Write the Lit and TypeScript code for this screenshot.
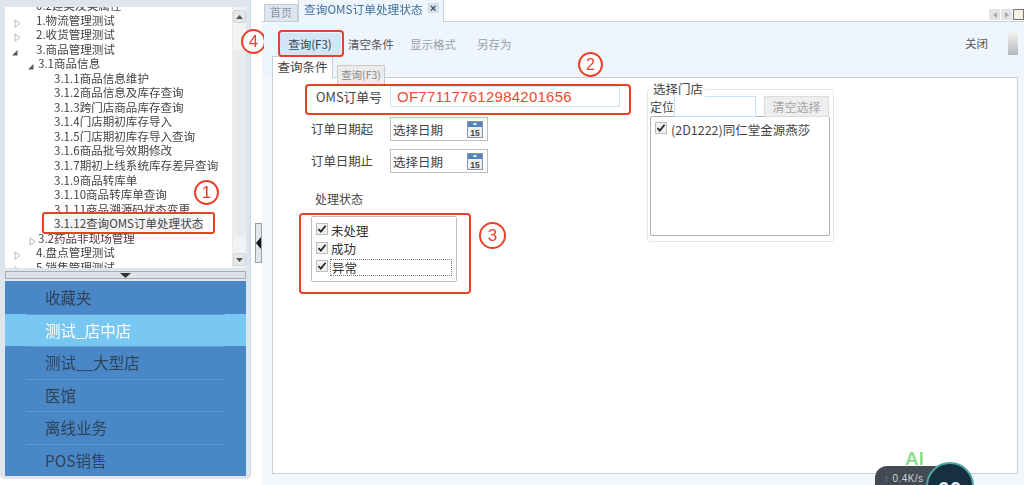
import { LitElement, html, css, svg } from "lit";
import { customElement } from "lit/decorators.js";

const closedTri = svg`<svg class="tri" width="7" height="9" viewBox="0 0 7 9"><path d="M1 .8 6 4.5 1 8.2Z" fill="#fff" stroke="#b4b8bc"/></svg>`;
const openTri = svg`<svg class="tri" width="7" height="9" viewBox="0 0 7 9"><path d="M6.5 2V7.5H1Z" fill="#555"/></svg>`;
const check = svg`<svg class="chk" width="12" height="12" viewBox="0 0 12 12"><rect x=".5" y=".5" width="11" height="11" fill="#f1f1f1" stroke="#bdbdbd"/><path d="M2.4 6 4.8 8.6 9.6 2.8" fill="none" stroke="#222" stroke-width="1.7"/></svg>`;
const cal = svg`<svg class="cal" width="16" height="17" viewBox="0 0 16 17"><rect x=".5" y=".5" width="15" height="16" fill="#eef1f4" stroke="#8c959d"/><rect x="1" y="1" width="14" height="5" fill="#4f86bd"/><rect x="6.5" y="2" width="3" height="2" fill="#e8f0f8"/><text x="8" y="14.5" text-anchor="middle" font-size="8.5" font-weight="700" font-family="Liberation Sans" fill="#3c4650">15</text></svg>`;

const tree: [string, number, string][] = [
  ["0.2建类及类属性", 31, ""],
  ["1.物流管理测试", 31, "c"],
  ["2.收货管理测试", 31, "c"],
  ["3.商品管理测试", 31, "o"],
  ["3.1商品信息", 33, "o2"],
  ["3.1.1商品信息维护", 49, ""],
  ["3.1.2商品信息及库存查询", 49, ""],
  ["3.1.3跨门店商品库存查询", 49, ""],
  ["3.1.4门店期初库存导入", 49, ""],
  ["3.1.5门店期初库存导入查询", 49, ""],
  ["3.1.6商品批号效期修改", 49, ""],
  ["3.1.7期初上线系统库存差异查询", 49, ""],
  ["3.1.9商品转库单", 49, ""],
  ["3.1.10商品转库单查询", 49, ""],
  ["3.1.11商品溯源码状态变更", 49, ""],
  ["3.1.12查询OMS订单处理状态", 49, "sel"],
  ["3.2药品非现场管理", 33, "c2"],
  ["4.盘点管理测试", 31, "c"],
  ["5.销售管理测试", 31, "c"],
];
const nav = ["收藏夹", "测试_店中店", "测试__大型店", "医馆", "离线业务", "POS销售"];

@customElement("app-root")
export class AppRoot extends LitElement {
  static styles = css`
    :host { display: block; width: 1024px; height: 485px; overflow: hidden; background: #fff; position: relative;
      font-family: "Noto Sans CJK SC", "Liberation Sans", sans-serif; font-size: 12px; color: #333; }
    .page { display: flex; width: 1024px; height: 485px; filter: blur(0.35px); }
    .left { width: 251px; flex: none; height: 479px; background: #dfe5ec; border-radius: 0 0 5px 5px; padding: 3px 4px 0 5px; box-sizing: border-box; display: flex; flex-direction: column; border-right: 1px solid #cfd6de; }
    .treebox { height: 261px; flex: none; margin-top: 4px; background: #fff; display: flex; }
    .tree { width: 227px; overflow: hidden; position: relative; font-size: 11.55px; color: #444; }
    .rows { margin-top: -9px; }
    .row { height: 14.55px; line-height: 14.55px; white-space: nowrap; position: relative; }
    .row .tri { position: absolute; top: 3px; }
    .sel { z-index: 1; }
    .sel::before { content: ""; position: absolute; left: 37px; top: -4px; width: 173px; height: 22px; box-sizing: border-box; border: 2.5px solid #e8412a; border-radius: 3px; background: #fff; z-index: -1; }
    .seltext { background: #f2f2f2; }
    .sb { width: 14px; background: #f0f2f4; display: flex; flex-direction: column; align-items: center; padding-top: 3px; box-sizing: border-box; border-left: 1px solid #e6e8ea; }
    .sb .btn { width: 13px; height: 13px; flex: none; background: #e6e7e8; border: 1px solid #d3d5d7; box-sizing: border-box; border-radius: 2px; display: flex; align-items: center; justify-content: center; }
    .sb .thumb { width: 12px; height: 186px; flex: none; margin: 27px 0 17px; background: #e9eaeb; border-radius: 2px; }
    .split { height: 8px; flex: none; box-sizing: border-box; margin-top: 3px; background: #dde2e8; border: 1px solid #a8adb2; display: flex; justify-content: center; align-items: center; }
    .nav { margin-top: 2px; background: #4a87c6; height: 195px; flex: none; display: flex; flex-direction: column; font-size: 15.5px; }
    .nav div { flex: 1; display: flex; align-items: center; padding-left: 40px; color: #2e4258; position: relative; }
    .nav div:not(:first-child)::before { content: ""; position: absolute; left: 21px; right: 21px; top: 0; height: 1px; background: #5f9cc8; }
    .nav div.on { background: #78c7f2; color: #fff; }
    .gutter { width: 11px; flex: none; background: #fff; display: flex; align-items: center; }
    .grip { width: 7px; height: 40px; margin-left: 4px; background: #e3e6e9; border: 1px solid #9aa0a6; box-sizing: border-box; display: flex; align-items: center; }
    .main { flex: 1; display: flex; flex-direction: column; min-width: 0; background: #fff; }
    .tabs { height: 22px; flex: none; box-sizing: border-box; display: flex; align-items: flex-end; padding-left: 2px; border-bottom: 1px solid #c6d0da; position: relative; }
    .tab0 { width: 34px; height: 17px; line-height: 15px; background: #dde6f0; border: 1px solid #c3ccd5; border-bottom: 0; text-align: center; color: #8792a0; box-sizing: border-box; font-size: 11px; }
    .tab1 { width: 146px; height: 23px; margin-bottom: -1px; background: #eef5fd; border: 1px solid #c6d0da; border-top: 0; border-bottom: 0; display: flex; align-items: center; padding-left: 5px; box-sizing: border-box; color: #3f6f9f; gap: 5px; padding-bottom: 5px; font-size: 11.7px; }
    .x { width: 11px; height: 10px; background: #d7dee6; color: #34506e; font-size: 11px; line-height: 10px; text-align: center; font-family: "Liberation Sans"; font-weight: 700; }
    .arrows { margin-left: auto; display: flex; gap: 1px; margin-bottom: 1px; }
    .arrows span { width: 11px; height: 11px; background: #e1e3e5; display: flex; align-items: center; justify-content: center; }
    .arrows svg { display: block; }
    .arrows .s { background: #f4f1e2; border: 1px solid #777; box-sizing: border-box; }
    .body { flex: 1; background: #f4f8fd; padding-right: 6px; display: flex; flex-direction: column; }
    .bar { height: 55px; flex: none; background: #eef5fd; padding-left: 10px; position: relative; display: flex; margin-right: -6px; padding-right: 6px; }
    .tools { display: flex; align-items: center; height: 30px; margin-top: 7px; gap: 16px; font-size: 11.5px; }
    .tb { color: #555; }
    .tb.q { width: 62px; text-align: center; margin-left: 7px; margin-right: -9px; color: #33414f; height: 22px; line-height: 22px; background: #d3e6f8; border-radius: 2px; }
    .tb.off { color: #9aa1a8; }
    .tools2 { margin-left: auto; display: flex; align-items: flex-start; margin-top: 10px; font-size: 11.5px; }
    .close { margin-top: 3px; margin-right: 20px; color: #555; }
    .handle { width: 10px; height: 23px; background: linear-gradient(#f3f3f3, #b5b8ba); }
    .qtab { position: absolute; left: 10px; bottom: -1px; width: 61px; height: 22px; line-height: 20px; background: #fff; border: 1px solid #c6d0da; border-bottom: 0; box-sizing: border-box; text-align: center; color: #444; font-size: 12.5px; z-index: 1; }
    .tip { position: absolute; left: 75px; top: 43px; width: 48px; height: 20px; line-height: 18px; background: #ececec; border: 1px solid #c9c9c9; box-sizing: border-box; text-align: center; font-size: 10.5px; color: #888; z-index: 2; }
    .panel { margin-left: 10px; height: 397px; flex: none; border: 1px solid #c6d0da; background: #fff; display: flex; padding: 8px 0 0 38px; box-sizing: border-box; }
    .col { width: 336px; flex: none; }
    .frow { display: flex; align-items: center; }
    .lab { width: 79px; text-align: left; color: #444; font-size: 12.4px; }
    .oms { margin-left: 5px; width: 74px; flex: none; font-size: 12.8px; }
    .omsin { width: 230px; height: 21px; box-sizing: border-box; border: 1px solid #cfe3f1; color: #ee4a30; font-size: 15px; font-family: "Liberation Sans"; line-height: 19px; padding-left: 6px; letter-spacing: .25px; }
    .date { width: 98px; height: 24px; box-sizing: border-box; border: 1px solid #b9c0c6; display: flex; align-items: center; justify-content: space-between; padding: 0 4px 0 2px; color: #444; font-size: 12.5px; }
    .gap1 { margin-top: 10px; }
    .gap2 { margin-top: 8px; }
    .st { margin: 17px 0 0 4px; color: #444; }
    .checks { width: 146px; height: 66px; margin-top: 9px; border: 1px solid #c0c0c0; border-radius: 2px; box-sizing: border-box; padding: 4px 4px; color: #333; font-size: 12.5px; }
    .ck { height: 18.5px; display: flex; align-items: center; gap: 3px; }
    .ck .chk { margin-top: -2px; }
    .ck .dot { flex: 1; height: 15px; line-height: 15px; border: 1px dotted #777; margin-left: -1px; padding-left: 1px; }
    .group { width: 187px; height: 153px; margin: 3px 0 0 0; border: 1px solid #e4e8ec; border-radius: 3px; box-sizing: border-box; padding: 5px 3px 3px 2px; position: relative; }
    .legend { position: absolute; left: 3px; top: -9px; background: #fff; padding: 0 2px; color: #444; font-size: 12.5px; line-height: 16px; }
    .g1 { display: flex; align-items: center; height: 22px; color: #444; }
    .loc { width: 82px; height: 21px; border: 1px solid #c9e2f2; box-sizing: border-box; }
    .clr { width: 65px; height: 21px; line-height: 19px; margin-left: 8px; background: #eee; border: 1px solid #ddd; box-sizing: border-box; color: #a5a5a5; text-align: center; }
    .list { height: 120px; width: 180px; box-sizing: border-box; border: 1px solid #b2b2b2; border-radius: 2px; margin-top: -1px; padding: 3px 4px; display: flex; align-items: flex-start; gap: 4px; color: #444; white-space: nowrap; font-size: 12.5px; }
    .list .chk { margin-top: 2px; }
    .ann { position: absolute; box-sizing: border-box; border: 2.5px solid #e8412a; border-radius: 4px; z-index: 5; }
    .num { position: absolute; box-sizing: border-box; border: 2px solid #e8412a; border-radius: 50%; background: #fff; color: #e8412a; text-align: center; font-family: "Liberation Sans"; z-index: 6; }
    .ai { position: absolute; left: 905px; top: 448px; font: 700 19px "Liberation Sans"; color: #8fe08e; z-index: 5; }
    .speed { position: absolute; left: 875px; top: 466px; width: 85px; height: 24px; background: #434a54; border-radius: 12px 0 0 0; color: #cfd4d9; font: 10px "Liberation Sans"; z-index: 6; padding: 7px 0 0 9px; box-sizing: border-box; letter-spacing: .4px; }
    .ring { position: absolute; left: 926px; top: 462px; width: 48px; height: 48px; border-radius: 50%; background: #17303f; border: 2px solid #4ea59f; box-sizing: border-box; color: #e8f2f4; font: 700 20px/50px "Liberation Sans"; text-align: center; z-index: 7; letter-spacing: 1px; }
  `;

  render() {
    return html`
      <div class="page">
        <div class="left">
          <div class="treebox">
            <div class="tree"><div class="rows">
              ${tree.map(([t, x, k]) => html`
                <div class="row ${k === "sel" ? "sel" : ""}" style="padding-left:${x}px">
                  ${k === "c" ? html`<span class="tri" style="left:9px">${closedTri}</span>` : ""}
                  ${k === "c2" ? html`<span class="tri" style="left:24px">${closedTri}</span>` : ""}
                  ${k === "o" ? html`<span class="tri" style="left:6px">${openTri}</span>` : ""}
                  ${k === "o2" ? html`<span class="tri" style="left:22px">${openTri}</span>` : ""}
                  <span class="${k === "sel" ? "seltext" : ""}">${t}</span>
                </div>`)}
            </div></div>
            <div class="sb">
              <div class="btn"><svg width="7" height="4"><path d="M0 4 3.5 0 7 4Z" fill="#555"/></svg></div>
              <div class="thumb"></div>
              <div class="btn"><svg width="7" height="4"><path d="M0 0 3.5 4 7 0Z" fill="#555"/></svg></div>
            </div>
          </div>
          <div class="split"><svg width="11" height="5"><path d="M0 0H11L5.5 5Z" fill="#333"/></svg></div>
          <div class="nav">${nav.map((n, i) => html`<div class="${i === 1 ? "on" : ""}">${n}</div>`)}</div>
        </div>
        <div class="gutter"><div class="grip"><svg width="5" height="12"><path d="M5 0V12L0 6Z" fill="#111"/></svg></div></div>
        <div class="main">
          <div class="tabs">
            <div class="tab0">首页</div>
            <div class="tab1">查询OMS订单处理状态 <span class="x">×</span></div>
            <div class="arrows">
              <span><svg width="4" height="6"><path d="M4 0V6L0 3Z" fill="#aaa"/></svg></span>
              <span><svg width="4" height="6"><path d="M0 0V6L4 3Z" fill="#aaa"/></svg></span>
              <span class="s"></span>
            </div>
          </div>
          <div class="body">
            <div class="bar">
              <div class="tools">
                <div class="tb q">查询(F3)</div>
                <div class="tb">清空条件</div>
                <div class="tb off">显示格式</div>
                <div class="tb off" style="margin-left:5px">另存为</div>
              </div>
              <div class="tools2"><span class="close">关闭</span><span class="handle"></span></div>
              <div class="qtab">查询条件</div>
              <div class="tip">查询(F3)</div>
            </div>
            <div class="panel">
              <div class="col">
                <div class="frow"><span class="lab oms">OMS订单号</span><div class="omsin">OF771177612984201656</div></div>
                <div class="frow gap1"><span class="lab">订单日期起</span><div class="date">选择日期${cal}</div></div>
                <div class="frow gap2"><span class="lab">订单日期止</span><div class="date">选择日期${cal}</div></div>
                <div class="st">处理状态</div>
                <div class="checks">
                  <div class="ck">${check}<span>未处理</span></div>
                  <div class="ck">${check}<span>成功</span></div>
                  <div class="ck">${check}<span class="dot">异常</span></div>
                </div>
              </div>
              <div class="group">
                <div class="legend">选择门店</div>
                <div class="g1"><span>定位</span><div class="loc"></div><div class="clr">清空选择</div></div>
                <div class="list">${check}<span>(2D1222)同仁堂金源燕莎</span></div>
              </div>
            </div>
          </div>
        </div>
      </div>
      <div class="ann" style="left:278px;top:30px;width:66px;height:27px"></div>
      <div class="ann" style="left:305px;top:84px;width:326px;height:31px"></div>
      <div class="ann" style="left:299px;top:213px;width:172px;height:81px"></div>
      <div class="num" style="left:194px;top:180px;width:25px;height:25px;font-size:17px;line-height:21px">1</div>
      <div class="num" style="left:578px;top:52px;width:25px;height:25px;font-size:16px;line-height:21px">2</div>
      <div class="num" style="left:479px;top:222px;width:27px;height:27px;font-size:17px;line-height:23px">3</div>
      <div class="num" style="left:241px;top:29px;width:25px;height:25px;font-size:17px;line-height:21px;clip-path:inset(0 2px 0 0)">4</div>
      <div class="ai">AI</div>
      <div class="speed"><span style="color:#4aa3e0">↑</span> 0.4K/s</div>
      <div class="ring">60</div>
    `;
  }
}
